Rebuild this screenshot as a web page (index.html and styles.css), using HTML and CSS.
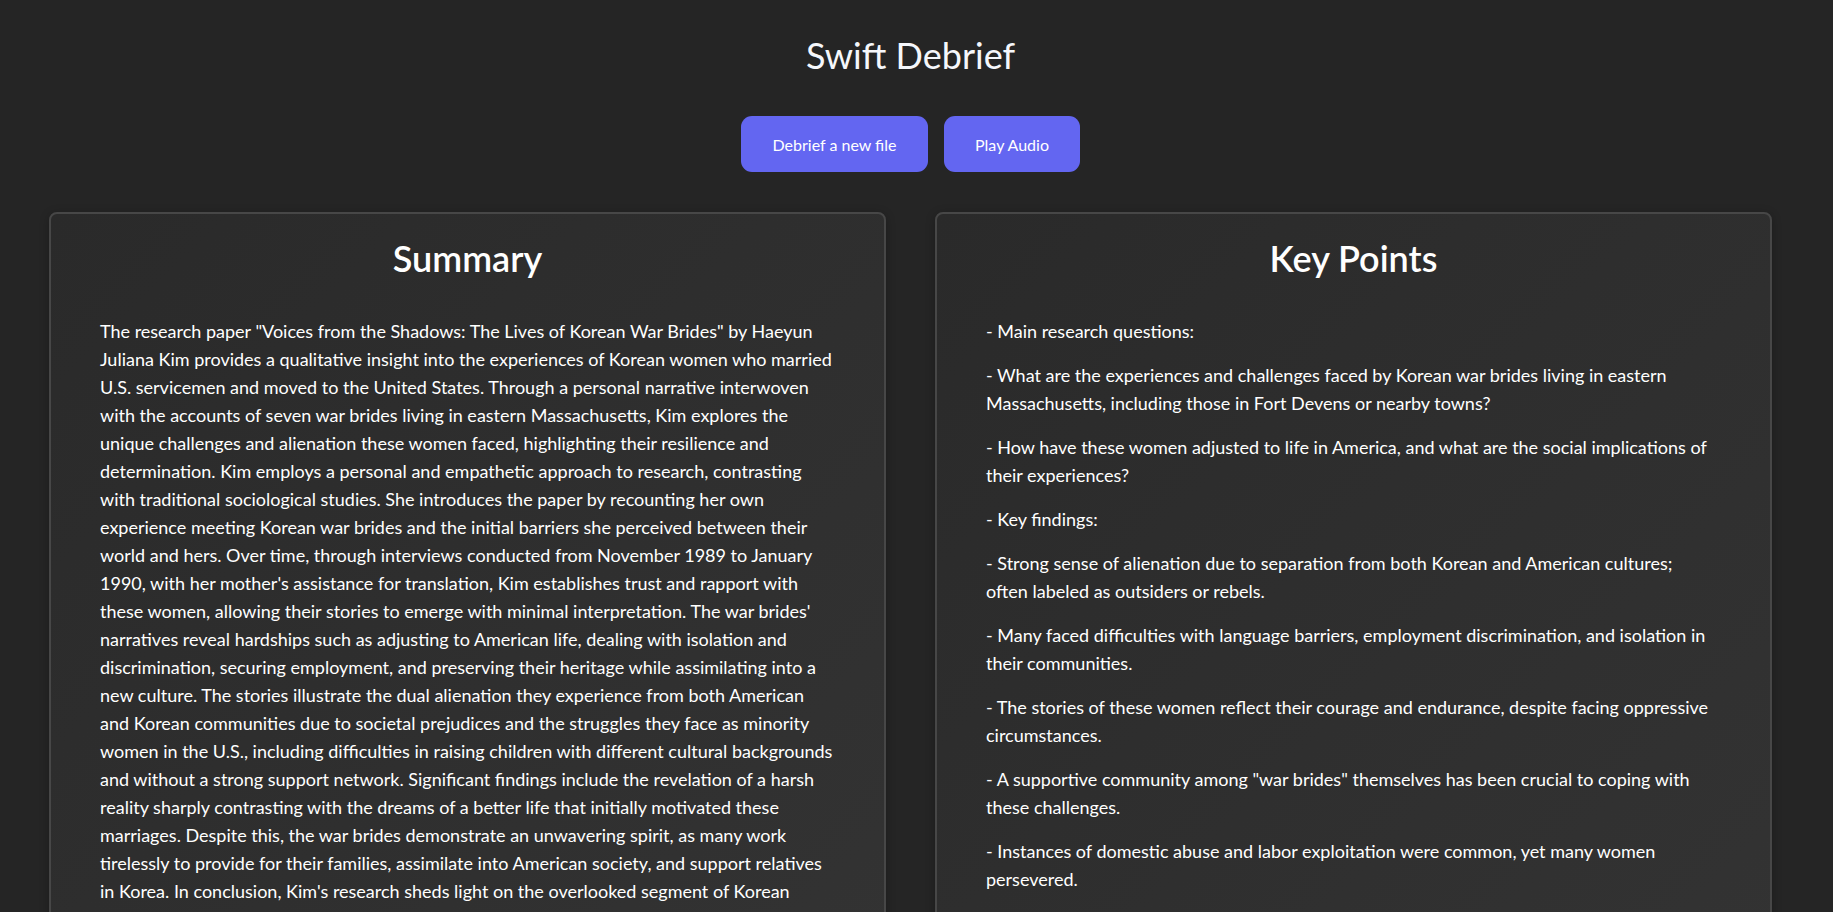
FILE: index.html
```html
<!DOCTYPE html>
<html lang="en">
<head>
<meta charset="utf-8">
<title>Swift Debrief</title>
<link rel="stylesheet" href="styles.css">
</head>
<body>
<div class="page">
  <h1 class="title">Swift Debrief</h1>
  <div class="actions">
    <button class="btn btn-new">Debrief a new file</button>
    <button class="btn btn-audio">Play Audio</button>
  </div>
  <div class="columns">
    <section class="card">
      <h2 class="card-title">Summary</h2>
      <p class="summary-text">The research paper "Voices from the Shadows: The Lives of Korean War Brides" by Haeyun Juliana Kim provides a qualitative insight into the experiences of Korean women who married U.S. servicemen and moved to the United States. Through a personal narrative interwoven with the accounts of seven war brides living in eastern Massachusetts, Kim explores the unique challenges and alienation these women faced, highlighting their resilience and determination. Kim employs a personal and empathetic approach to research, contrasting with traditional sociological studies. She introduces the paper by recounting her own experience meeting Korean war brides and the initial barriers she perceived between their world and hers. Over time, through interviews conducted from November 1989 to January 1990, with her mother's assistance for translation, Kim establishes trust and rapport with these women, allowing their stories to emerge with minimal interpretation. The war brides' narratives reveal hardships such as adjusting to American life, dealing with isolation and discrimination, securing employment, and preserving their heritage while assimilating into a new culture. The stories illustrate the dual alienation they experience from both American and Korean communities due to societal prejudices and the struggles they face as minority women in the U.S., including difficulties in raising children with different cultural backgrounds and without a strong support network. Significant findings include the revelation of a harsh reality sharply contrasting with the dreams of a better life that initially motivated these marriages. Despite this, the war brides demonstrate an unwavering spirit, as many work tirelessly to provide for their families, assimilate into American society, and support relatives in Korea. In conclusion, Kim's research sheds light on the overlooked segment of Korean American history, giving voice to women whose experiences have long remained in the shadows.</p>
    </section>
    <section class="card">
      <h2 class="card-title">Key Points</h2>
      <div class="points">
        <p class="point">- Main research questions:</p>
        <p class="point">- What are the experiences and challenges faced by Korean war brides living in eastern Massachusetts, including those in Fort Devens or nearby towns?</p>
        <p class="point">- How have these women adjusted to life in America, and what are the social implications of their experiences?</p>
        <p class="point">- Key findings:</p>
        <p class="point">- Strong sense of alienation due to separation from both Korean and American cultures; often labeled as outsiders or rebels.</p>
        <p class="point">- Many faced difficulties with language barriers, employment discrimination, and isolation in their communities.</p>
        <p class="point">- The stories of these women reflect their courage and endurance, despite facing oppressive circumstances.</p>
        <p class="point">- A supportive community among "war brides" themselves has been crucial to coping with these challenges.</p>
        <p class="point">- Instances of domestic abuse and labor exploitation were common, yet many women persevered.</p>
        <p class="point">- Methodology: qualitative interviews with seven war brides, conducted with the help of the author's mother as translator.</p>
      </div>
    </section>
  </div>
</div>
</body>
</html>
```
FILE: styles.css
```css
* { box-sizing: border-box; }
html, body {
  margin: 0;
  padding: 0;
  background: #252525;
}
body {
  font-family: Lato, "Noto Sans", "Liberation Sans", sans-serif;
  color: #ffffff;
}
.page {
  padding: 35px 61px 40px 49px;
}
.title {
  margin: 0;
  text-align: center;
  font-size: 36px;
  line-height: 40px;
  font-weight: 400;
  color: #f5f7fb;
}
.actions {
  display: flex;
  justify-content: center;
  gap: 16px;
  margin-top: 41px;
}
.btn {
  height: 56px;
  border: none;
  border-radius: 11px;
  background: #6366f1;
  color: #ffffff;
  font-family: inherit;
  font-size: 16px;
  padding: 0;
  cursor: pointer;
}
.btn-new { width: 187px; }
.btn-audio { width: 136px; }
.columns {
  display: grid;
  grid-template-columns: 1fr 1fr;
  gap: 49px;
  margin-top: 40px;
}
.card {
  border: 2px solid #474747;
  border-radius: 8px;
  background: linear-gradient(135deg, #2a2a2a 0%, #333333 100%);
  padding: 24px 49px 30px 49px;
  box-shadow: 0 2px 10px rgba(0,0,0,0.25);
}
.card-title {
  margin: 0 0 39px 0;
  text-align: center;
  font-size: 36px;
  line-height: 40px;
  font-weight: 600;
}
.summary-text {
  margin: 0;
  font-size: 18px;
  line-height: 28px;
}
.points {
  padding-right: 8px;
}
.points .point {
  margin: 0 0 16px 0;
  font-size: 18px;
  line-height: 28px;
}
```
